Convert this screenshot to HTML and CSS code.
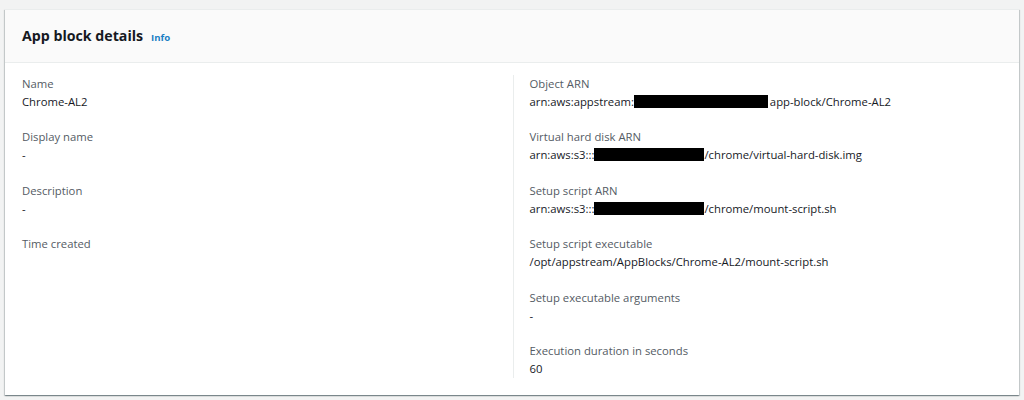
FILE: index.html
```html
<!DOCTYPE html>
<html lang="en">
<head>
<meta charset="utf-8">
<title>App block details</title>
<link rel="stylesheet" href="styles.css">
</head>
<body>
<div class="page">
  <section class="card">
    <header class="card-header">
      <h2 class="title">App block details</h2>
      <a class="info" href="#">Info</a>
    </header>
    <div class="card-body">
      <div class="col">
        <div class="item"><div class="label">Name</div><div class="value">Chrome-AL2</div></div>
        <div class="item"><div class="label">Display name</div><div class="value">-</div></div>
        <div class="item"><div class="label">Description</div><div class="value">-</div></div>
        <div class="item"><div class="label">Time created</div><div class="value"></div></div>
      </div>
      <div class="col col-right">
        <div class="item"><div class="label">Object ARN</div><div class="value">arn:aws:appstream:<span class="redact r-obj"></span>app-block/Chrome-AL2</div></div>
        <div class="item"><div class="label">Virtual hard disk ARN</div><div class="value">arn:aws:s3:::<span class="redact r-s3"></span>/chrome/virtual-hard-disk.img</div></div>
        <div class="item"><div class="label">Setup script ARN</div><div class="value">arn:aws:s3:::<span class="redact r-s3"></span>/chrome/mount-script.sh</div></div>
        <div class="item"><div class="label">Setup script executable</div><div class="value">/opt/appstream/AppBlocks/Chrome-AL2/mount-script.sh</div></div>
        <div class="item"><div class="label">Setup executable arguments</div><div class="value">-</div></div>
        <div class="item"><div class="label">Execution duration in seconds</div><div class="value">60</div></div>
      </div>
    </div>
  </section>
</div>
</body>
</html>
```
FILE: styles.css
```css
html, body {
  margin: 0;
  padding: 0;
  background: #f2f3f3;
  font-family: "Open Sans", "Noto Sans", sans-serif;
  color: #16191f;
}
.page {
  padding: 9px 5px 5px 5px;
}
.card {
  background: #ffffff;
  border-top: 1px solid #eaeded;
  box-shadow: 0 1px 1px 0 rgba(0, 28, 36, 0.3), 1px 1px 1px 0 rgba(0, 28, 36, 0.15), -1px 1px 1px 0 rgba(0, 28, 36, 0.15);
}
.card-header {
  display: flex;
  align-items: baseline;
  gap: 8px;
  background: #fafafa;
  border-bottom: 1px solid #eaeded;
  padding: 14px 17px 15px;
  height: 23px;
}
.title {
  margin: 0;
  font-size: 14.2px;
  line-height: 23px;
  font-weight: 700;
  color: #16191f;
}
.info {
  font-size: 9.6px;
  font-weight: 700;
  color: #1a7fc4;
  text-decoration: none;
}
.card-body {
  display: grid;
  grid-template-columns: 1fr 1fr;
  padding: 12px 16px 17px 17px;
}
.col-right {
  border-left: 1px solid #eaeded;
  padding-left: 16px;
}
.item + .item {
  margin-top: 17.4px;
}
.label {
  font-size: 11.3px;
  line-height: 18px;
  color: #545b64;
}
.value {
  font-size: 11.3px;
  line-height: 18px;
  min-height: 18px;
  color: #16191f;
  white-space: nowrap;
}
.redact {
  display: inline-block;
  background: #000;
  height: 13px;
  vertical-align: -2px;
}
.r-obj {
  width: 134px;
  margin-left: 0;
  margin-right: 2px;
}
.r-s3 {
  width: 110px;
  margin-left: 0;
}
```
